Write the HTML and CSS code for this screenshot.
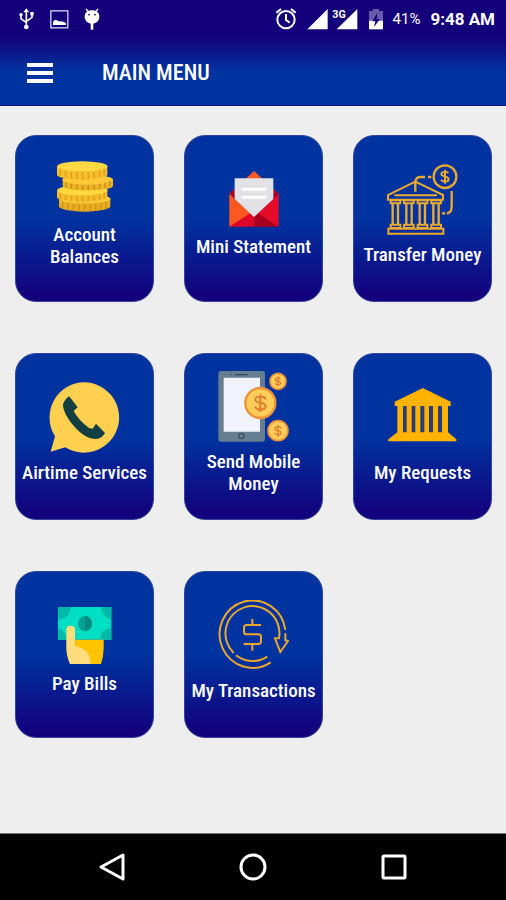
FILE: index.html
```html
<!DOCTYPE html>
<html lang="en">
<head>
<meta charset="utf-8">
<meta name="viewport" content="width=device-width, initial-scale=1">
<title>Main Menu</title>
<link rel="stylesheet" href="styles.css">
</head>
<body>
<header class="top">
  <div class="status">
    <div class="status-left">
      <svg width="16" height="22" viewBox="57 22 48 66" fill="none" stroke="#fff" stroke-width="5" aria-hidden="true"><path d="M79 30V80M63 42V54L79 66M96 42V50L79 62"/><path d="M70 35L79 23L88 35Z" fill="#fff" stroke="none"/><circle cx="63" cy="42" r="5" fill="#fff" stroke="none"/><rect x="91" y="34" width="10" height="10" fill="#fff" stroke="none"/><circle cx="79" cy="79" r="7" fill="#fff" stroke="none"/></svg>
      <svg width="19" height="19" viewBox="150 26 57 57" aria-hidden="true"><rect x="152.500" y="28.500" width="51" height="51" fill="none" stroke="#d6cff2" stroke-width="4"/><path d="M159 71V62Q166 50 175 60Q190 58 198 66V71Z" fill="#fff"/></svg>
      <svg width="16" height="22" viewBox="256 22 48 66" fill="#fff" aria-hidden="true"><path d="M262 25L269 33M298 25L291 33" stroke="#fff" stroke-width="4"/><path d="M258 48C258 35 267 29 280 29S302 35 302 48C302 60 292 69 280 69S258 60 258 48Z"/><rect x="276" y="66" width="8" height="21"/><circle cx="271" cy="42" r="2.500" fill="#14007a"/><circle cx="289" cy="42" r="2.500" fill="#14007a"/></svg>
    </div>
    <div class="status-right">
      <svg width="22" height="22" viewBox="62 22 66 66" fill="none" stroke="#fff" stroke-width="6" aria-hidden="true"><circle cx="95" cy="57" r="26"/><path d="M95 40V58L106 66M66 36L80 25M124 36L110 25"/></svg>
      <svg width="52" height="22" viewBox="156 22 156 66" fill="#fff" aria-hidden="true"><path d="M157 86L218 25V86ZM245 86L307 25V86Z"/><text class="network" x="232" y="52">3G</text></svg>
      <svg width="14" height="22" viewBox="340 22 42 66" aria-hidden="true"><path d="M340 31H351V25H370V31H382V60H340Z" fill="#6959aa"/><path d="M340 60H382V86H340Z" fill="#fff"/><path d="M365 37L350 62H359L355 79L373 55H363Z" fill="#14007a"/></svg>
      <span class="percent">41%</span>
      <time class="clock">9:48 AM</time>
    </div>
  </div>
  <div class="bar">
    <button class="menu" type="button" aria-label="Open menu"><span></span><span></span><span></span></button>
    <h1>MAIN MENU</h1>
  </div>
</header>

<main class="grid">
  <button class="card" type="button">
    <svg width="56" height="54" viewBox="141 96 168 162" aria-hidden="true">
      <path d="M147 207H301V232C301 240 270 248 224 248S147 240 147 232Z" fill="#e9ad20"/>
      <ellipse cx="224" cy="209" rx="77" ry="14" fill="#ffd23d"/>
      <path d="M158 218V238M174 222V243M191 225V246M207 226V247M224 226V247M241 226V247M257 225V246M273 222V243M288 218V239" stroke="#cf951c" stroke-width="5"/>
      <path d="M141 184H292V206C292 213 261 219 218 219S141 213 141 205Z" fill="#f7bd2b"/>
      <ellipse cx="217" cy="184" rx="76" ry="15" fill="#ffd83f"/>
      <path d="M151 193V211M167 198V214M184 200V216M201 202V218M218 202V218M235 201V217M252 199V215M269 196V212M283 191V209" stroke="#dda321" stroke-width="5"/>
      <path d="M158 150H309V171C309 178 278 184 233 184S158 178 158 170Z" fill="#efb324"/>
      <ellipse cx="233" cy="152" rx="76" ry="15" fill="#ffc936"/>
      <path d="M168 160V176M184 164V180M201 166V182M218 168V183M235 168V184M252 167V182M269 164V180M285 161V177M299 156V173" stroke="#ca931d" stroke-width="5"/>
      <path d="M141 113H292V137C292 145 260 152 217 152S141 145 141 137Z" fill="#f8bf2d"/>
      <ellipse cx="217" cy="112" rx="76" ry="15" fill="#ffd944"/>
      <path d="M151 122V142M167 126V146M184 129V149M201 130V151M218 130V152M235 130V151M252 128V148M269 125V145M283 121V141" stroke="#dda321" stroke-width="5"/>
    </svg>
    <span class="label">Account Balances</span>
  </button>

  <button class="card" type="button">
    <svg width="50" height="56" viewBox="146 123 150 168" aria-hidden="true">
      <path d="M147 192L221 123L295 192Z" fill="#ff5a1f"/>
      <path d="M147 192L163 177V210ZM295 192L279 177V210Z" fill="#a90022"/>
      <path d="M147 192L221 260L147 290Z" fill="#ff571f"/>
      <path d="M295 192L221 260L295 290Z" fill="#e50b27"/>
      <path d="M147 290L221 242V290Z" fill="#df0528"/>
      <path d="M221 242L295 290H221Z" fill="#aa0020"/>
      <path d="M163 145H279V207L221 261L163 207Z" fill="#e1e1e6"/>
      <path d="M188 178H254M188 202H254" stroke="#fff" stroke-width="9" stroke-linecap="round"/>
    </svg>
    <span class="label">Mini Statement</span>
  </button>

  <button class="card" type="button">
    <svg width="71" height="71" viewBox="123 99 213 213" fill="none" stroke="#eba92f" stroke-width="6" aria-hidden="true">
      <circle cx="297" cy="137" r="34" stroke-width="7"/>
      <path d="M307 126C303 121 286 121 286 129C286 139 308 134 308 145C308 154 289 153 285 146M297 116V158"/>
      <path d="M208 182V151Q211 137 226 138H237M246 138H256M317 180V226Q317 246 303 247M298 247H288" stroke-width="7"/>
      <path d="M208 152L291 192V206H126V192ZM145 193H273"/>
      <path d="M134 208H163V217H134ZM174 208H203V217H174ZM215 208H244V217H215ZM256 208H285V217H256Z"/>
      <path d="M140 218V280M156 218V280M181 218V280M197 218V280M221 218V280M237 218V280M262 218V280M278 218V280" stroke-width="7"/>
      <path d="M134 281H163V291H134ZM174 281H203V291H174ZM215 281H244V291H215ZM256 281H285V291H256ZM127 293H292V308H127Z"/>
    </svg>
    <span class="label">Transfer Money</span>
  </button>

  <button class="card" type="button">
    <svg width="71" height="71" viewBox="119 108 213 213" aria-hidden="true">
      <path d="M225 109A105.500 105.500 0 1 1 168 304L124 317L137 271A105.500 105.500 0 0 1 225 109Z" fill="#ffd050"/>
      <path d="M177 152Q180 150 183 155L205 184L193 195Q207 222 239 246L250 248L260 233L287 261Q278 278 260 279C241 278 227 271 207 254C184 232 164 203 161 180Q160 166 177 152Z" fill="#123f42"/>
    </svg>
    <span class="label">Airtime Services</span>
  </button>

  <button class="card" type="button">
    <svg width="71" height="71" viewBox="114 75 213 213" aria-hidden="true">
      <rect x="115" y="75" width="140" height="212" rx="9" fill="#657e91"/>
      <path d="M131 95H240V257H131Z" fill="#f0f3f9"/>
      <path d="M167 86H201" stroke="#34485a" stroke-width="4" stroke-linecap="round"/><circle cx="154" cy="86" r="2" fill="#34485a"/>
      <circle cx="184" cy="270" r="8" fill="none" stroke="#3d5061" stroke-width="4"/>
      <g fill="#ffcd58" stroke="#ee9137"><circle cx="241" cy="171" r="45" stroke-width="7"/><circle cx="294" cy="106" r="24" stroke-width="5"/><circle cx="294" cy="254" r="30" stroke-width="5"/></g>
      <g fill="none" stroke="#df7d33">
        <path d="M257 160C252 148 226 150 226 161C226 175 257 166 257 181C257 194 230 194 225 181M241 145V198" stroke-width="6"/>
        <path d="M301 100C298 93 286 95 286 101C286 108 302 104 302 111C302 118 288 118 286 112M294 91V121M303 247C299 239 285 241 285 248C285 257 303 251 303 260C303 269 287 268 284 261M294 236V272" stroke-width="4"/>
      </g>
    </svg>
    <span class="label">Send Mobile Money</span>
  </button>

  <button class="card" type="button">
    <svg width="71" height="71" viewBox="123 108 213 213" fill="#ffb300" aria-hidden="true">
      <path d="M229 127H232L314 167V180H306V259L331 280V286H127V280L154 259V180H146V167Z"/>
      <path d="M171 180H182V259H171ZM197 180H208V259H197ZM223 180H235V259H223ZM249 180H261V259H249ZM276 180H288V259H276Z" fill="#273d78"/>
    </svg>
    <span class="label">My Requests</span>
  </button>

  <button class="card" type="button">
    <svg width="54" height="57" viewBox="144 123 162 171" aria-hidden="true">
      <path d="M144 123H304V221H144Z" fill="#00dfc4"/>
      <path d="M144 123H183Q181 156 144 163ZM273 123H304V160Q276 154 273 123ZM144 188Q166 191 174 221H144ZM304 185Q270 190 270 221H304Z" fill="#00b9a6"/>
      <ellipse cx="225" cy="173" rx="21" ry="23" fill="#00a393"/><path d="M225 150A21 23 0 0 1 225 196Z" fill="#008b80"/>
      <path d="M188 221H281V248Q280 275 273 294H181Q172 276 171 250Z" fill="#ffc400"/>
      <path d="M169 191Q169 179 182 179T195 191V241Q239 246 243 294H180Q169 268 169 245Z" fill="#ffdc7c"/>
    </svg>
    <span class="label">Pay Bills</span>
  </button>

  <button class="card" type="button">
    <svg width="71" height="71" viewBox="114 105 213 213" fill="none" stroke="#e9a72d" stroke-width="6" aria-hidden="true">
      <path d="M316 195A99 101 0 1 0 272 292M262 275A81 82 0 0 1 168 271M161 264A81 82 0 1 1 297 220H285L301 261L324 228L316 226V205"/>
      <path d="M243 180H200Q192 180 192 188V200Q192 208 200 208H235Q243 208 243 216V229Q243 237 235 237H191M217 162V180M217 237V257"/>
    </svg>
    <span class="label">My Transactions</span>
  </button>
</main>

<nav class="system-nav" aria-label="System">
  <button type="button" aria-label="Back"><svg width="28" height="30" viewBox="0 0 28 30" aria-hidden="true"><path d="M3 15L25 3V27Z"/></svg></button>
  <button type="button" aria-label="Home"><svg width="30" height="30" viewBox="0 0 30 30" aria-hidden="true"><circle cx="15" cy="15" r="12"/></svg></button>
  <button type="button" aria-label="Recent apps"><svg width="28" height="30" viewBox="0 0 28 30" aria-hidden="true"><rect x="3" y="4" width="22" height="22" rx="1"/></svg></button>
</nav>
</body>
</html>
```
FILE: styles.css
```css
* {
  box-sizing: border-box;
}

body {
  margin: 0;
  min-height: 100vh;
  display: flex;
  flex-direction: column;
  background: #eee;
  color: #fff;
  font-family: "Roboto Condensed", "Liberation Sans Narrow", Roboto, sans-serif;
}

button {
  margin: 0;
  padding: 0;
  border: 0;
  background: none;
  color: inherit;
  font: inherit;
  cursor: pointer;
}

svg {
  display: block;
  flex: none;
}

.top {
  border-bottom: 1px solid #14107c;
  background: linear-gradient(#14007a 34%, #0033a0 68%);
}

.status {
  display: flex;
  justify-content: space-between;
  height: 38px;
  padding: 0 11px 0 19px;
  font-family: Roboto, sans-serif;
}

.status-left,
.status-right {
  display: flex;
  align-items: center;
}

.status-left {
  gap: 15px;
}

.status-right {
  gap: 10px;
}

.network {
  font-size: 32px;
  font-weight: 700;
  stroke: #14007a;
  stroke-width: 4px;
  paint-order: stroke;
}

.percent {
  font-size: 15px;
}

.clock {
  font-size: 17px;
  font-weight: 700;
}

.bar {
  display: flex;
  align-items: center;
  gap: 49px;
  height: 67px;
  padding: 3px 27px 0;
}

.menu {
  display: grid;
  gap: 4px;
  width: 26px;
}

.menu span {
  height: 4px;
  background: #fff;
}

h1 {
  margin: 0;
  font-size: 22px;
  font-weight: 500;
  line-height: 28px;
}

.grid {
  flex: 1;
  display: grid;
  grid-template-columns: repeat(3, 1fr);
  grid-auto-rows: minmax(167px, auto);
  align-content: start;
  gap: 51px 30px;
  padding: 29px 14px 29px 15px;
}

.card {
  display: flex;
  flex-direction: column;
  align-items: center;
  justify-content: center;
  gap: 9px;
  padding: 0 4px 8px;
  border: 1px solid #33459a;
  border-radius: 21px;
  background: linear-gradient(#0033a0 50%, #14007c 98%);
}

.label {
  max-width: 128px;
  font-size: 19px;
  font-weight: 500;
  line-height: 22px;
  text-align: center;
}

.system-nav {
  display: flex;
  align-items: center;
  justify-content: space-around;
  height: 67px;
  padding: 0 42px;
  border-top: 1px solid #777;
  background: #000;
}

.system-nav svg {
  fill: none;
  stroke: #fff;
  stroke-width: 3px;
  stroke-linejoin: round;
}
```
